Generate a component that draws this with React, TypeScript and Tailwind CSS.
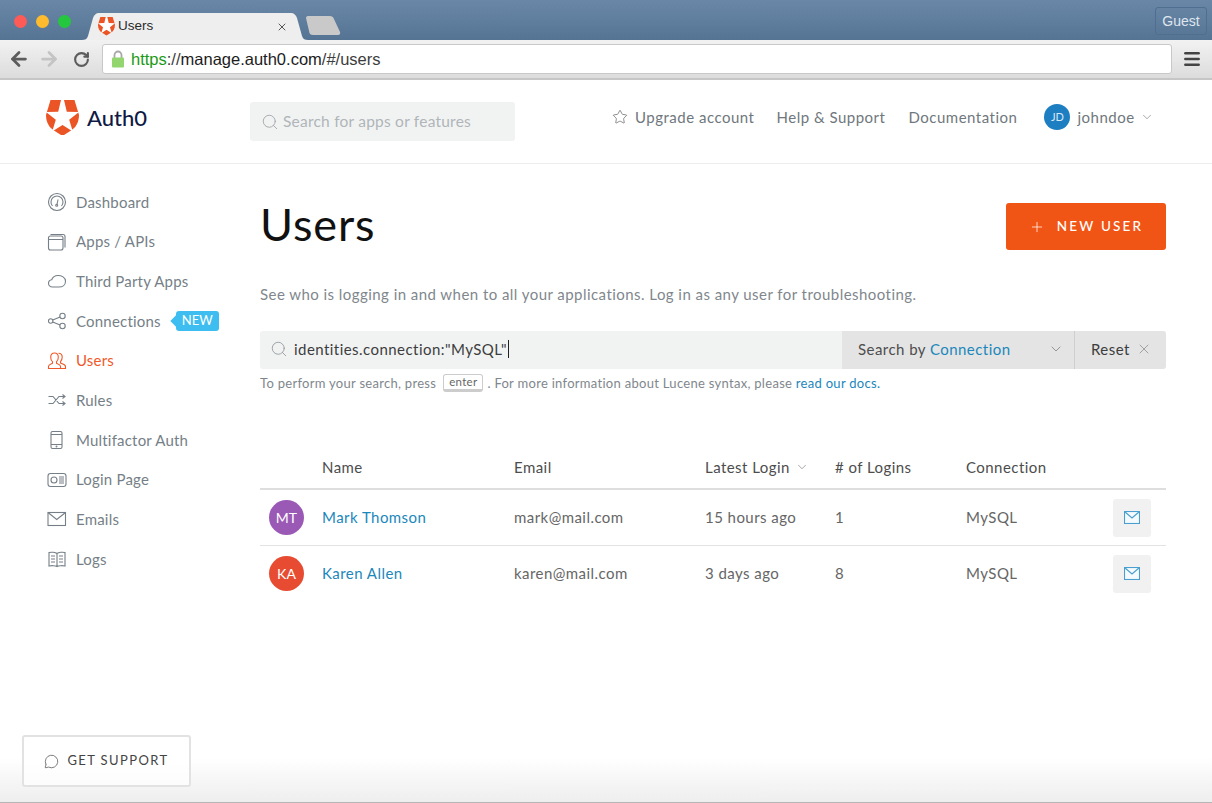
import React from 'react';
import { ArrowLeft, ArrowRight, ChevronDown, Menu, MessageCircle, Plus, RotateCw, Search, Star, X } from 'lucide-react';

const navIcon = { width: 20, height: 20, viewBox: '0 0 20 20', fill: 'none', stroke: 'currentColor', strokeWidth: 1.1 };

const Shield: React.FC<{ size: number }> = ({ size }) => (
  <svg width={size} height={size * 1.09} viewBox="0 0 33 36">
    <path d="M4.500 0h24L33 15c0 8-3.500 12.500-8 15.500L16.500 36 8 30.500C3.500 27.500 0 23 0 15z" fill="#eb5424" />
    <path d="M15 0h3l2.800 11.800L33 12l-9.800 7.700 3.600 11.800-10.300-6.500-10.300 6.500 3.600-11.800L0 12l12.200-.2z" fill="#fff" />
  </svg>
);

const navItems: { label: string; icon: React.ReactNode; active?: boolean; badge?: boolean }[] = [
  {
    label: 'Dashboard',
    icon: (
      <svg {...navIcon}>
        <circle cx="10" cy="10" r="8.500" />
        <path d="M5.500 14A6 6 0 1 1 14.500 14" />
        <path d="M10 12.500l1-5" />
        <circle cx="9.700" cy="13.300" r="1" />
      </svg>
    ),
  },
  {
    label: 'Apps / APIs',
    icon: (
      <svg {...navIcon}>
        <rect x="1.500" y="4" width="14.500" height="14" rx="2" />
        <path d="M1.500 7.500h14.500M3.500 2.500h12.500a2 2 0 0 1 2 2v11" />
      </svg>
    ),
  },
  {
    label: 'Third Party Apps',
    icon: (
      <svg {...navIcon}>
        <path d="M5.500 16C3 16 1.500 14.300 1.500 12.300c0-2 1.300-3.300 3.200-3.600C5.700 6 8 4.500 11 4.500c3.500 0 7.500 1.800 7.500 5.700 0 3.800-3 5.800-6.500 5.800z" />
      </svg>
    ),
  },
  {
    label: 'Connections',
    badge: true,
    icon: (
      <svg {...navIcon}>
        <circle cx="3.700" cy="10" r="2.200" />
        <circle cx="15.500" cy="5" r="2.700" />
        <circle cx="15.500" cy="15" r="2.700" />
        <path d="M5.700 9l7.400-3M5.700 11l7.400 3" />
      </svg>
    ),
  },
  {
    label: 'Users',
    active: true,
    icon: (
      <svg {...navIcon}>
        <path d="M7.500 2c-2.400 0-3.800 1.800-3.800 4.200 0 2 .8 3.500 1.800 4.400v1.600c-1.700.8-4 1.400-4 3v2.300h12V15.200c0-1.600-2.300-2.200-4-3v-1.600c1-.9 1.800-2.400 1.800-4.400C11.300 3.800 9.900 2 7.500 2z" />
        <path d="M11.500 2.300c2.300 0 3.700 1.700 3.700 4 0 2-.8 3.400-1.700 4.300v1.500c1.900.8 5 1.500 5 3.300v2.100h-4.500" />
      </svg>
    ),
  },
  {
    label: 'Rules',
    icon: (
      <svg {...navIcon}>
        <path d="M1.500 6.500h4.500l6 7h5.500M1.500 13.500h4.500l6-7h5.500M15.500 4.500l2.500 2-2.500 2M15.500 11.500l2.500 2-2.500 2" />
      </svg>
    ),
  },
  {
    label: 'Multifactor Auth',
    icon: (
      <svg {...navIcon}>
        <rect x="4" y="1.500" width="11" height="17" rx="1.500" />
        <path d="M4 4.500h11M4 14.500h11" />
        <circle cx="9.500" cy="16.500" r=".4" />
      </svg>
    ),
  },
  {
    label: 'Login Page',
    icon: (
      <svg {...navIcon}>
        <rect x="1" y="3.500" width="18" height="13" rx="2.500" />
        <circle cx="7" cy="10" r="3" />
        <path d="M12 7h5M12 9h5M12 11h5M12 13h5" />
      </svg>
    ),
  },
  {
    label: 'Emails',
    icon: (
      <svg {...navIcon}>
        <rect x="1" y="3.500" width="17.500" height="13" />
        <path d="M1 3.500l8.750 7 8.750-7" />
      </svg>
    ),
  },
  {
    label: 'Logs',
    icon: (
      <svg {...navIcon}>
        <path d="M10 4.500C8.500 3 4 3 2 3.500V17c2-.5 6.500-.5 8 .5 1.500-1 6-1 8-.5V3.500c-2-.5-6.500-.5-8 1zM10 4.500v13" />
        <path d="M4 7h4M4 10h4M4 13h4M12 7h4M12 10h4M12 13h4" />
      </svg>
    ),
  },
];

const users = [
  { initials: 'MT', color: 'bg-[#9b59b6]', name: 'Mark Thomson', email: 'mark@mail.com', login: '15 hours ago', count: '1' },
  { initials: 'KA', color: 'bg-[#e74c33]', name: 'Karen Allen', email: 'karen@mail.com', login: '3 days ago', count: '8' },
];

const gridCols = 'grid grid-cols-[62px_192px_191px_130px_131px_1fr] items-center';

const MailIcon = () => (
  <svg width="16" height="13" viewBox="0 0 16 13" fill="#f4fafd" stroke="#4a9fd0" strokeWidth="1.100">
    <rect x=".5" y=".5" width="15" height="12" />
    <path d="M.5.500L8 7l7.500-6.500" fill="none" />
  </svg>
);

const LockIcon = () => (
  <svg width="14" height="18" viewBox="0 0 14 18">
    <path d="M3.500 8V5a3.500 3.500 0 0 1 7 0v3" fill="none" stroke="#a8a8a8" strokeWidth="1.800" />
    <rect x="1" y="7.500" width="12" height="10" rx="1" fill="#93d56e" />
  </svg>
);

export default function App() {
  return (
    <div className="relative h-[803px] w-full overflow-hidden bg-white font-['Lato',sans-serif] text-[15px] tracking-[0.45px] text-[#70777d]">
      {/* browser tab strip */}
      <div className="flex h-10 items-end bg-gradient-to-b from-[#6a87a8] to-[#557494] font-['Liberation_Sans',sans-serif] tracking-normal">
        <div className="flex h-10 w-[82px] shrink-0 items-center gap-[9px] pt-[2px] pl-[14px]">
          <span className="h-[13px] w-[13px] rounded-full bg-[#fc5b57]" />
          <span className="h-[13px] w-[13px] rounded-full bg-[#febb2e]" />
          <span className="h-[13px] w-[13px] rounded-full bg-[#25c73f]" />
        </div>
        <div className="relative flex h-[27px] w-[226px] shrink-0 items-center pl-[16px] pr-[16px]">
          <svg className="absolute inset-0" width="226" height="27" viewBox="0 0 226 27">
            <path d="M0 27c3 0 5-1 6-4L11 5c1-3 3-5 6-5h192c3 0 5 2 6 5l5 18c1 3 3 4 6 4z" fill="#eeeeee" />
          </svg>
          <span className="relative shrink-0"><Shield size={17} /></span>
          <span className="relative ml-[3px] text-[13.500px] text-[#2a2a2a]">Users</span>
          <X size={12} strokeWidth={1.800} className="relative ml-auto mr-[4px] text-[#444]" />
        </div>
        <svg width="36" height="19" viewBox="0 0 36 19" className="mb-[5px] shrink-0 -translate-x-[3px]">
          <path d="M1 2c0-1 .5-2 2-2h22c2 0 3 1 3.500 2L35 16c.5 1.500 0 3-2 3H8c-2 0-3-1-3.500-2z" fill="#c9c9c9" />
        </svg>
        <div className="ml-auto mr-[5px] mt-[2px] flex h-[28px] w-[52px] items-center justify-center self-center rounded-[3px] border border-[#4f6f90] text-[14px] text-[#dfe6ee]">
          Guest
        </div>
      </div>

      {/* browser toolbar */}
      <div className="flex h-10 items-center border-b-2 border-[#c6c6c6] bg-gradient-to-b from-[#f2f2f2] to-[#dcdcdc] font-['Liberation_Sans',sans-serif] tracking-normal">
        <ArrowLeft size={22} strokeWidth={3} className="ml-[8px] text-[#5c5c5c]" />
        <ArrowRight size={22} strokeWidth={3} className="ml-[8px] text-[#c4c4c4]" />
        <RotateCw size={17} strokeWidth={3} className="ml-[13px] text-[#5c5c5c]" />
        <div className="ml-[12px] flex h-[30px] w-[1070px] items-center rounded-[3px] border border-[#c8c8c8] bg-white pl-[8px]">
          <LockIcon />
          <span className="ml-[6px] text-[16.500px] text-[#3d3d3d]">
            <span className="text-[#1c9a16]">https</span>://<span className="text-[#1c1c1c]">manage.auth0.com</span>/#/users
          </span>
        </div>
        <Menu size={20} strokeWidth={3} className="ml-[10px] text-[#444]" />
      </div>

      {/* app header */}
      <header className="flex h-[84px] items-center border-b border-[#eeeeee] pl-[46px]">
        <div className="flex w-[204px] shrink-0 items-center gap-[8px] pb-[8px]">
          <Shield size={33} />
          <span className="text-[22px] font-medium leading-none tracking-normal text-[#0f1a45]">Auth0</span>
        </div>
        <div className="flex h-[39px] w-[265px] shrink-0 items-center rounded-[3px] bg-[#f1f3f3] pl-[11px] tracking-[0.22px] text-[#b0b5b8]">
          <Search size={18} strokeWidth={1.100} className="text-[#9a9fa2]" />
          <span className="ml-[4px] text-[15.500px]">Search for apps or features</span>
        </div>
        <nav className="ml-[97px] flex items-center pb-[9px] tracking-[0.5px]">
          <Star size={16} strokeWidth={1.100} className="text-[#666]" />
          <span className="ml-[7px]">Upgrade account</span>
          <span className="ml-[22px]">Help &amp; Support</span>
          <span className="ml-[23px]">Documentation</span>
          <span className="ml-[27px] flex h-[26px] w-[26px] items-center justify-center rounded-full bg-[#1d7ec2] text-[11px] tracking-normal text-[#d8e9f5]">JD</span>
          <span className="ml-[7px]">johndoe</span>
          <ChevronDown size={14} strokeWidth={1.100} className="ml-[5px] text-[#777]" />
        </nav>
      </header>

      <div className="flex">
        {/* sidebar */}
        <aside className="w-[260px] shrink-0 pl-[47px] pt-[18px] tracking-[0.2px]">
          {navItems.map((item) => (
            <div key={item.label} className={`flex h-[39.700px] items-center ${item.active ? 'text-[#f0592a]' : 'text-[#767f87]'}`}>
              <span className="flex w-[29px] shrink-0">{item.icon}</span>
              <span>{item.label}</span>
              {item.badge && (
                <span className="relative ml-[15px] flex h-[20px] items-center rounded-[3px] bg-[#3ebdf0] px-[6px] text-[13px] tracking-normal text-white">
                  <span className="absolute -left-[4px] h-2 w-2 rotate-45 bg-[#3ebdf0]" />
                  NEW
                </span>
              )}
            </div>
          ))}
        </aside>

        {/* main */}
        <main className="w-[906px] shrink-0 pt-[39px]">
          <div className="flex items-start justify-between">
            <h1 className="-mt-[2px] text-[45px] font-normal leading-[47px] tracking-[0.9px] text-[#111111]">Users</h1>
            <button className="flex h-[47px] w-[160px] items-center justify-center rounded-[3px] bg-[#f15516] text-[13.500px] font-medium tracking-[2.200px] text-white">
              <Plus size={16} strokeWidth={1.100} className="mr-[12px]" />
              NEW USER
            </button>
          </div>
          <p className="mt-[34px] leading-[20px] text-[#7f878d]">
            See who is logging in and when to all your applications. Log in as any user for troubleshooting.
          </p>

          <div className="mt-[27px] flex h-[38px] items-stretch overflow-hidden rounded-[3px] bg-[#f1f3f3]">
            <div className="flex flex-1 items-center pb-[2px] pl-[10px] text-[#3d3d3d]">
              <Search size={18} strokeWidth={1.100} className="text-[#8e9497]" />
              <span className="ml-[6px]">identities.connection:"MySQL"</span>
              <span className="ml-[1px] h-[18px] w-px bg-[#222]" />
            </div>
            <div className="flex w-[233px] items-center border-r border-[#cfcfcf] bg-[#e4e4e4] pb-[2px] pl-[16px] pr-[10px] text-[#4d4d4d]">
              <span>Search by <span className="text-[#1b87bb]">Connection</span></span>
              <ChevronDown size={16} strokeWidth={1.100} className="ml-auto text-[#777]" />
            </div>
            <div className="flex w-[91px] items-center bg-[#e4e4e4] pb-[2px] pl-[16px] text-[#3d3d3d]">
              Reset
              <X size={16} strokeWidth={1.100} className="ml-[6px] text-[#888]" />
            </div>
          </div>

          <p className="mt-[5px] flex items-center text-[13px] leading-[18px] tracking-[0.29px] text-[#7f878d]">
            To perform your search, press
            <span className="ml-[7px] mr-[4px] rounded-[3px] border border-b-[3px] border-[#cccccc] px-[5px] text-[11.500px] leading-[14px] text-[#666]">enter</span>
            . For more information about Lucene syntax, please&nbsp;
            <span className="text-[#1b87bb]">read our docs.</span>
          </p>

          <div className={`${gridCols} mt-[54px] h-[44px] border-b-2 border-[#dedede] text-[#4d4d4d]`}>
            <span />
            <span>Name</span>
            <span>Email</span>
            <span className="flex items-center">
              Latest Login
              <ChevronDown size={14} strokeWidth={1.100} className="ml-[5px] text-[#777]" />
            </span>
            <span># of Logins</span>
            <span>Connection</span>
          </div>
          {users.map((u) => (
            <div key={u.email} className={`${gridCols} h-[56px] border-b border-[#e3e3e3] text-[#666] last:border-transparent`}>
              <span className={`ml-[9px] flex h-[35px] w-[35px] items-center justify-center rounded-full text-[14px] tracking-normal text-white ${u.color}`}>
                {u.initials}
              </span>
              <span className="text-[#1b87bb]">{u.name}</span>
              <span>{u.email}</span>
              <span>{u.login}</span>
              <span>{u.count}</span>
              <div className="flex items-center">
                <span>MySQL</span>
                <span className="ml-auto mr-[15px] flex h-[38px] w-[38px] items-center justify-center rounded-[3px] bg-[#f1f1f1]">
                  <MailIcon />
                </span>
              </div>
            </div>
          ))}
        </main>
      </div>

      {/* bottom fade and floating support button */}
      <div className="pointer-events-none absolute inset-x-0 bottom-0 h-[45px] border-b border-[#b5b5b5] bg-gradient-to-b from-white to-[#eeeeee]" />
      <button className="absolute bottom-[16px] left-[22px] flex h-[52px] w-[169px] items-center justify-center rounded-[3px] border-2 border-[#e2e2e2] bg-white/70 text-[13px] tracking-[1.400px] text-[#444]">
        <MessageCircle size={15} strokeWidth={1.100} className="mr-[8px]" />
        GET SUPPORT
      </button>
    </div>
  );
}
